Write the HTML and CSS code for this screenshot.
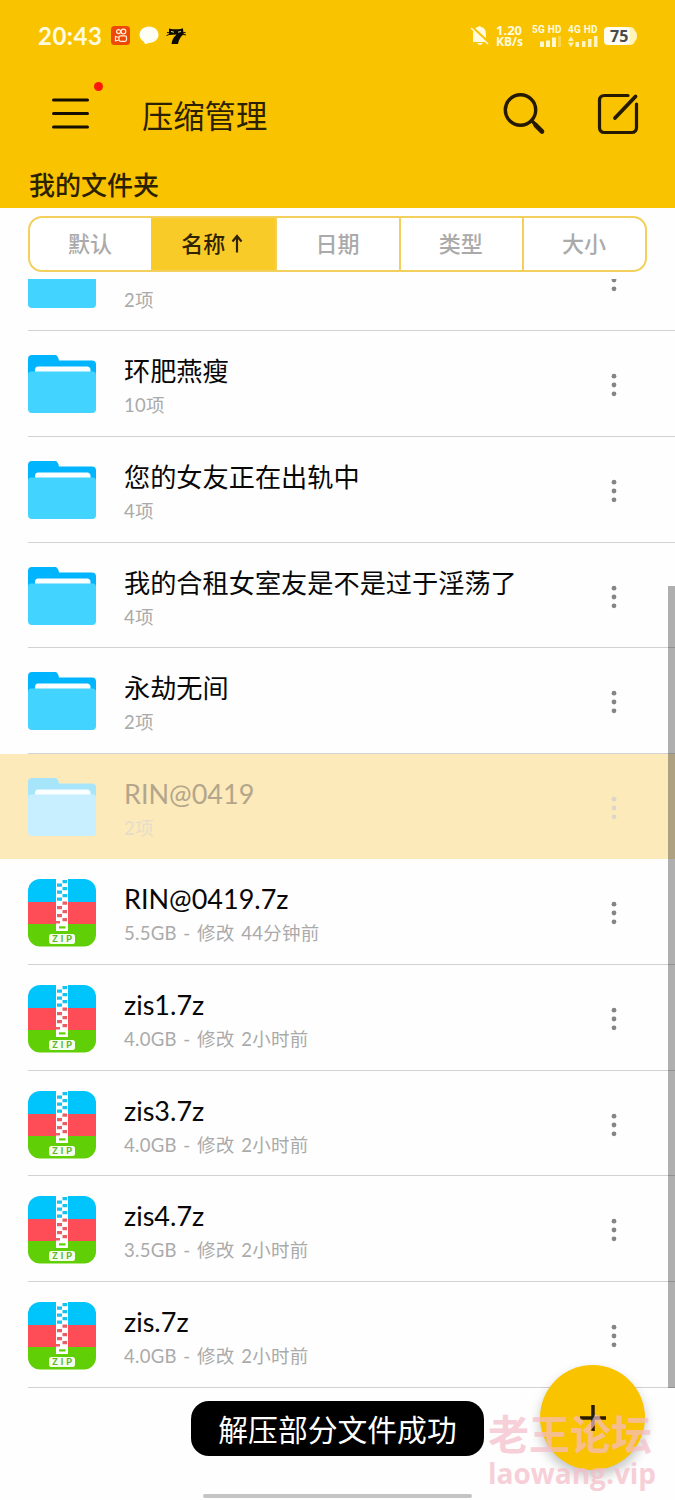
FILE: index.html
```html
<!DOCTYPE html>
<html lang="zh-CN">
<head>
<meta charset="utf-8">
<title>压缩管理</title>
<link rel="stylesheet" href="styles.css">
</head>
<body>
<svg class="defs" width="0" height="0">
  <symbol id="folder" viewBox="0 0 68 68">
    <path class="folder-back" d="M0 8q0-4 4-4h23q3 0 4 5.500h33q4 0 4 4V40H0z"/>
    <path fill="#fbfeff" d="M7 23v-4q0-3.500 3-3.500h49q3.500 0 3.500 3.500v4z"/>
    <path class="folder-front" d="M0 24q0-3.500 3-3.500h62q3 0 3 3.500v34q0 4-4 4H4q-4 0-4-4z"/>
  </symbol>
  <symbol id="zip" viewBox="0 0 68 68">
    <clipPath id="round"><rect width="68" height="67.500" rx="12"/></clipPath>
    <g clip-path="url(#round)">
      <rect width="68" height="24" fill="#00c5fc"/>
      <rect y="23" width="68" height="23" fill="#ff4d57"/>
      <rect y="45" width="68" height="23" fill="#60cf05"/>
      <path fill="#fff" d="M28 0h12v52H28z"/>
      <path fill="#13c4f2" d="M34.500 1h4.500v3.200h-4.500zM29 4.500h5v3.200h-5zM34.500 8h4.500v3.200h-4.500zM29 11.500h5v3.200h-5zM34.500 15h4.500v3.200h-4.500zM29 18.500h5v3.200h-5z"/>
      <path fill="#ea5d64" d="M34.500 22.500h4.500v3.200h-4.500zM29 27h5v3.200h-5zM34.500 31h4.500v3.200h-4.500zM29 35h5v3.200h-5zM34.500 39h4.500v3.200h-4.500zM28 42h4v2.500h-4z"/>
      <rect x="31" y="47.300" width="6.500" height="2.200" fill="#60cf05"/>
      <rect x="21" y="55" width="26" height="10" rx="2.500" fill="#f5ffed"/>
    </g>
  </symbol>
  <symbol id="dots" viewBox="0 0 6 24"><circle cx="3" cy="3.200" r="2.400"/><circle cx="3" cy="12" r="2.400"/><circle cx="3" cy="20.800" r="2.400"/></symbol>
</svg>

<header class="header">
  <div class="status">
    <span class="clock">20:43</span>
    <svg class="apps" width="78" height="24" viewBox="0 0 78 24">
      <rect x="0" y="2" width="19" height="19" rx="3.500" fill="#ee4809"/>
      <g fill="none" stroke="#fff2d8" stroke-width="1.200"><circle cx="7.600" cy="7.600" r="2"/><circle cx="12.400" cy="7.600" r="2.400"/><rect x="8" y="11.800" width="7.500" height="5.500" rx="1.500"/><path d="M8 13.500l-3.500-1v4.500l3.500-1"/></g>
      <path fill="#fffef5" d="M38 2.500c5.300 0 9.500 3.600 9.500 8.200s-4.200 8.200-9.500 8.200l-4 1.300-1-2.500c-2.700-1.500-4.500-4-4.500-7 0-4.600 4.200-8.200 9.500-8.200z"/>
      <path fill="#0d0b00" d="M58 4.500q2 .8 4 .8h5q3-.2 5-1l.5 6q-4.500 3.500-5.500 9.700h-6.500q.5-5.500 5-9.500l-7.500.5z"/>
      <path fill="none" stroke="#0d0b00" d="M56 8.500l4 .5M55.500 11.500l4-1.500M74.500 8.500l-4 .5M75 11l-4-1"/>
      <path fill="none" stroke="#e8d58b" d="M60 7.500l3 .7M67 8.200l3-.7"/>
    </svg>
    <div class="network">
      <svg width="20" height="22" viewBox="0 0 20 22"><path fill="#fffae0" d="M3 16V9q0-6 5-7 1.500-2 3 0 5 1 5 7v6l2 2H3zM7 18h6q-3 4-6 0z"/><path d="M1 1l18 17" stroke="#f9c300" stroke-width="2.500"/><path d="M1 3l17 16" stroke="#fffae0" stroke-width="1.500"/></svg>
      <div class="speed"><span>1.20</span><span>KB/s</span></div>
      <div class="sim"><span>5G HD</span><svg width="30" height="11" viewBox="0 0 30 11"><path fill="#fff8d0" d="M8 5.500h4V11H8zM14 4.500h4V11h-4zM20 1.500h4V11h-4z"/><path fill="#fcd44b" d="M26 0h3v11h-3z"/></svg></div>
      <div class="sim"><span>4G HD</span><svg width="30" height="11" viewBox="0 0 30 11"><path fill="#fff4bd" d="M0 5l3-4.500L6 5zM0 6.500h6L3 11zM7.500 6H11v5H7.500zM14 5h3.500v6H14zM20 3h3.500v8H20zM26 0h3.500v11H26z"/></svg></div>
      <div class="battery"><svg width="34" height="18" viewBox="0 0 34 18"><path fill="#fff4b9" d="M24 0h2q4 0 5 4 2 1 2 5t-2 5q-1 4-5 4h-2z"/><rect width="26" height="18" rx="4" fill="#fffdf2"/></svg><b>75</b></div>
    </div>
  </div>
  <div class="bar">
    <div class="menu"><svg width="38" height="32" viewBox="0 0 38 32"><path d="M1.500 2h34M1.500 15.500h34M1.500 29h34" stroke="#160f00" stroke-width="3" stroke-linecap="round"/></svg><i class="badge"></i></div>
    <h1 class="title">压缩管理</h1>
    <svg class="search" width="44" height="44" viewBox="0 0 44 44" fill="none" stroke="#251a00" stroke-linecap="round"><circle cx="17.500" cy="18" r="15.200" stroke-width="3.400"/><path d="M28.500 28.500l5 5" stroke-width="3.400"/><path d="M32.500 33l6.500 6.500" stroke-width="4.600"/></svg>
    <svg class="edit" width="44" height="44" viewBox="0 0 44 44" fill="none" stroke="#251a00" stroke-linecap="round"><path d="M31 3.500H7.500q-5 0-5 5v27q0 5 5 5h27q5 0 5-5V12" stroke-width="3.200"/><path d="M18 26L38.500 4.500" stroke-width="3.800"/></svg>
  </div>
  <div class="location">我的文件夹</div>
</header>

<nav class="tabs">
  <span class="tab">默认</span><span class="tab active">名称<svg width="16" height="20" viewBox="0 0 16 20"><path d="M8 18.500V2M3.500 7.500L8 2l4.500 5.500" fill="none" stroke="#302300" stroke-width="2.200"/></svg></span><span class="tab">日期</span><span class="tab">类型</span><span class="tab">大小</span>
</nav>

<main class="list">
  <div class="row"><div class="cell"><svg class="icon"><use href="#folder"/></svg><div class="text"><div class="name">&nbsp;</div><div class="meta">2项</div></div><svg class="dots"><use href="#dots"/></svg></div></div>
  <div class="row"><div class="cell"><svg class="icon"><use href="#folder"/></svg><div class="text"><div class="name">环肥燕瘦</div><div class="meta">10项</div></div><svg class="dots"><use href="#dots"/></svg></div></div>
  <div class="row"><div class="cell"><svg class="icon"><use href="#folder"/></svg><div class="text"><div class="name">您的女友正在出轨中</div><div class="meta">4项</div></div><svg class="dots"><use href="#dots"/></svg></div></div>
  <div class="row"><div class="cell"><svg class="icon"><use href="#folder"/></svg><div class="text"><div class="name">我的合租女室友是不是过于淫荡了</div><div class="meta">4项</div></div><svg class="dots"><use href="#dots"/></svg></div></div>
  <div class="row"><div class="cell"><svg class="icon"><use href="#folder"/></svg><div class="text"><div class="name">永劫无间</div><div class="meta">2项</div></div><svg class="dots"><use href="#dots"/></svg></div></div>
  <div class="row selected"><div class="cell"><svg class="icon"><use href="#folder"/></svg><div class="text"><div class="name latin">RIN@0419</div><div class="meta">2项</div></div><svg class="dots"><use href="#dots"/></svg></div></div>
  <div class="row"><div class="cell"><svg class="icon"><use href="#zip"/><text class="zip-label" x="34" y="63" textLength="20">ZIP</text></svg><div class="text"><div class="name latin">RIN@0419.7z</div><div class="meta">5.5GB - 修改 44分钟前</div></div><svg class="dots"><use href="#dots"/></svg></div></div>
  <div class="row"><div class="cell"><svg class="icon"><use href="#zip"/><text class="zip-label" x="34" y="63" textLength="20">ZIP</text></svg><div class="text"><div class="name latin">zis1.7z</div><div class="meta">4.0GB - 修改 2小时前</div></div><svg class="dots"><use href="#dots"/></svg></div></div>
  <div class="row"><div class="cell"><svg class="icon"><use href="#zip"/><text class="zip-label" x="34" y="63" textLength="20">ZIP</text></svg><div class="text"><div class="name latin">zis3.7z</div><div class="meta">4.0GB - 修改 2小时前</div></div><svg class="dots"><use href="#dots"/></svg></div></div>
  <div class="row"><div class="cell"><svg class="icon"><use href="#zip"/><text class="zip-label" x="34" y="63" textLength="20">ZIP</text></svg><div class="text"><div class="name latin">zis4.7z</div><div class="meta">3.5GB - 修改 2小时前</div></div><svg class="dots"><use href="#dots"/></svg></div></div>
  <div class="row"><div class="cell"><svg class="icon"><use href="#zip"/><text class="zip-label" x="34" y="63" textLength="20">ZIP</text></svg><div class="text"><div class="name latin">zis.7z</div><div class="meta">4.0GB - 修改 2小时前</div></div><svg class="dots"><use href="#dots"/></svg></div></div>
  <div class="scrollbar"></div>
</main>

<div class="fab"><svg width="26" height="26" viewBox="0 0 26 26"><path d="M13 0v26M0 13h26" stroke="#251b00" stroke-width="3.500"/></svg></div>
<div class="toast">解压部分文件成功</div>
<div class="watermark"><span class="mark-name">老王论坛</span><span class="mark-site">laowang.vip</span></div>
<div class="home-bar"></div>
</body>
</html>
```

FILE: styles.css
```css
* { box-sizing: border-box; }
body {
  margin: 0; width: 675px; height: 1500px; position: relative; overflow: hidden;
  background: #fefefe; color: #080808;
  font-family: Lato, "Noto Sans CJK SC", sans-serif;
}
svg { display: block; flex: none; }
.defs { position: absolute; }
.header { height: 208px; background: #f9c300; color: #2b2000; }
.status { height: 71px; padding: 0 37px 0 38px; display: flex; align-items: center; color: #fffbe0; }
.clock { width: 73px; font-size: 24px; line-height: 30px; font-weight: 700; letter-spacing: .5px; white-space: nowrap; }
.network { margin-left: auto; display: flex; align-items: center; }
.speed { width: 28px; margin: 0 8px 0 6px; font: 700 12px/12px "Open Sans", sans-serif; display: flex; flex-direction: column; white-space: nowrap; }
.speed span:first-child { font-size: 13px; }
.sim { width: 30px; margin-right: 6px; font: 700 10px/11px Roboto, sans-serif; letter-spacing: .2px; white-space: nowrap; display: flex; flex-direction: column; gap: 1px; }
.battery { position: relative; width: 34px; height: 18px; }
.battery b { position: absolute; left: 6px; top: 0; font: 700 16px/18px "Open Sans", sans-serif; color: #494a4c; }
.bar { height: 85px; padding: 0 34px 0 52px; display: flex; align-items: center; }
.menu { position: relative; width: 38px; margin-right: 52px; }
.badge { position: absolute; right: -13px; top: -16px; width: 9px; height: 9px; border-radius: 50%; background: #fa180a; }
.title { margin: 5px 0 0; font-size: 31.300px; line-height: 40px; font-weight: 400; }
.search { margin-left: auto; margin-right: 50px; }
.location { padding-left: 29px; font-size: 26px; line-height: 59px; font-weight: 500; }
.tabs { margin: 8px 28px 7px; width: 619px; height: 56px; display: flex; border: 2px solid #f3d05c; border-radius: 14px; overflow: hidden; background: #fff; }
.tab { flex: 1; display: flex; align-items: center; justify-content: center; gap: 4px; padding: 0 1px 0 0; font-size: 22px; line-height: 30px; font-weight: 500; color: #aaa; border-left: 2px solid #f3d05c; }
.tab:first-child { border-left: 0; }
.active { background: #f9cb29; color: #302300; border-color: #f9cb29; }
.tab.active { padding-right: 2px; }
.list { height: 1108.500px; overflow: hidden; position: relative; display: flex; flex-direction: column; justify-content: flex-end; }
.row { height: 105.640px; flex: none; padding-left: 28px; }
.cell { height: 100%; display: flex; padding-top: 20px; border-bottom: 1.500px solid #d2d2d5; }
.icon { width: 68px; height: 68px; --back: #00b4fd; --front: #43d3ff; }
.folder-back { fill: var(--back); }
.folder-front { fill: var(--front); }
.zip-label { font: 700 9px Inter, sans-serif; fill: #62b52d; text-anchor: middle; }
.text { flex: 1; padding-left: 28px; }
.name { font-size: 26.200px; line-height: 40px; white-space: nowrap; }
.name + .meta { line-height: 28px; }
.latin { font-size: 27px; }
.meta { font-size: 18.500px; color: #aaa; white-space: nowrap; letter-spacing: .3px; word-spacing: 1.500px; }
.dots { width: 6px; height: 24px; margin: 22px 58px 0 0; fill: #858585; }
.selected { background: #fceabb; }
.selected .icon { --back: #a7e5fb; --front: #c7efff; }
.selected .name { color: #b3a68c; }
.selected .meta { color: #e5ddc8; }
.selected .dots { fill: #dcd7c5; }
.selected .cell { border-color: #fceabb; }
.scrollbar { position: absolute; right: 0; top: 307px; width: 7px; height: 802px; background: rgba(0,0,0,.31); }
.fab { position: absolute; left: 540px; top: 1365px; width: 105px; height: 105px; border-radius: 50%; background: #f9c300; display: flex; align-items: center; justify-content: center; box-shadow: 0 6px 12px rgba(0,0,0,.24); }
.toast { position: absolute; left: 191px; top: 1401px; width: 293px; height: 55px; border-radius: 18px; background: #000; color: #fff; font-size: 29.800px; line-height: 57px; text-align: center; white-space: nowrap; }
.watermark { position: absolute; left: 488px; top: 1407px; display: flex; flex-direction: column; color: #f5bcc8; opacity: .7; white-space: nowrap; }
.mark-name { font: 700 41px/50px "Noto Sans CJK SC", sans-serif; }
.mark-site { font: 700 28px/33px "Open Sans", sans-serif; }
.home-bar { position: absolute; left: 203px; top: 1494px; width: 269px; height: 4px; border-radius: 2px; background: #c4c4c4; }
```
